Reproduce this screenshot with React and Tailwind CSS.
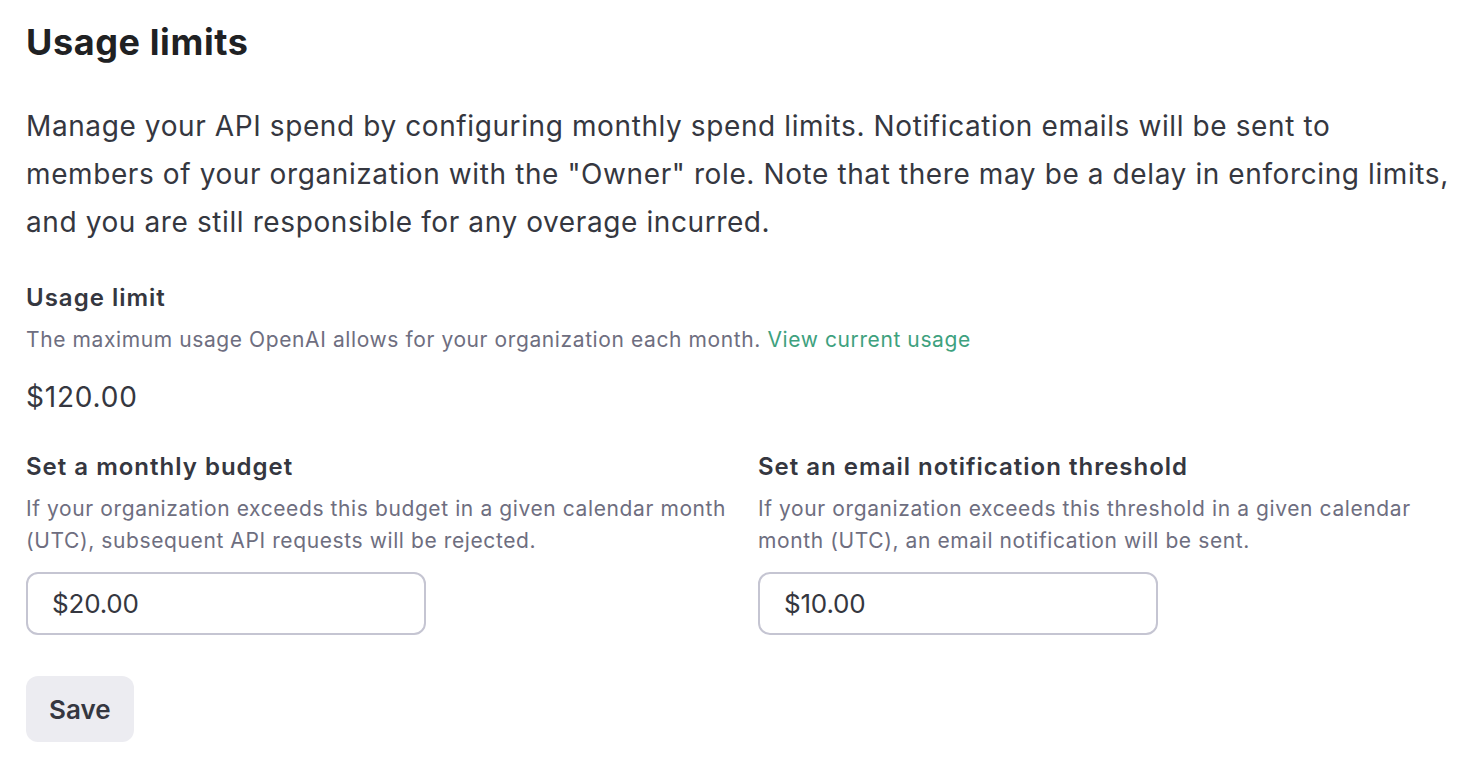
export default function App() {
  return (
    <main
      className="min-h-screen bg-white pl-[26px] text-[#202123]"
      style={{ fontFamily: 'Inter, "Noto Sans", sans-serif' }}
    >
      <h1 className="pt-[20px] text-[36px] font-bold leading-[44px] tracking-[0.6px]">Usage limits</h1>

      <p className="mt-[38px] text-[28px] leading-[48px] tracking-[0.6px] text-[#353740]">
        Manage your API spend by configuring monthly spend limits. Notification emails will be sent to members of your
        organization with the "Owner" role. Note that there may be a delay in enforcing limits, and you are still
        responsible for any overage incurred.
      </p>

      <section className="mt-[36px]">
        <h2 className="text-[24px] font-semibold leading-[32px] tracking-[1px] text-[#353740]">Usage limit</h2>
        <p className="mt-[10px] text-[21px] leading-[32px] tracking-[0.6px] text-[#6e6e80]">
          The maximum usage OpenAI allows for your organization each month.{' '}
          <a href="#" className="text-[#3ea17e]">View current usage</a>
        </p>
        <div className="mt-[25px] text-[28px] leading-[32px] tracking-[0.8px] text-[#353740]">$120.00</div>
      </section>

      <div className="mt-[38px] grid grid-cols-2 gap-[26px]">
        <div>
          <h2 className="text-[24px] font-semibold leading-[32px] tracking-[1px] text-[#353740]">Set a monthly budget</h2>
          <p className="mt-[10px] text-[21px] leading-[32px] tracking-[0.6px] text-[#6e6e80]">
            If your organization exceeds this budget in a given calendar month (UTC), subsequent API requests will be
            rejected.
          </p>
          <input
            defaultValue="$20.00"
            className="mt-[15px] h-[63px] w-[400px] rounded-[12px] border-2 border-[#c5c5d2] px-[24px] text-[26px] tracking-[-0.2px] text-[#353740] outline-none"
          />
        </div>
        <div>
          <h2 className="text-[24px] font-semibold leading-[32px] tracking-[1px] text-[#353740]">
            Set an email notification threshold
          </h2>
          <p className="mt-[10px] text-[21px] leading-[32px] tracking-[0.6px] text-[#6e6e80]">
            If your organization exceeds this threshold in a given calendar month (UTC), an email notification will be
            sent.
          </p>
          <input
            defaultValue="$10.00"
            className="mt-[15px] h-[63px] w-[400px] rounded-[12px] border-2 border-[#c5c5d2] px-[24px] text-[26px] tracking-[-0.2px] text-[#353740] outline-none"
          />
        </div>
      </div>

      <button
        type="button"
        className="mt-[41px] h-[66px] rounded-[12px] bg-[#ececf1] px-[23px] text-[26px] font-semibold tracking-[0px] text-[#353740]"
      >
        Save
      </button>
    </main>
  )
}
